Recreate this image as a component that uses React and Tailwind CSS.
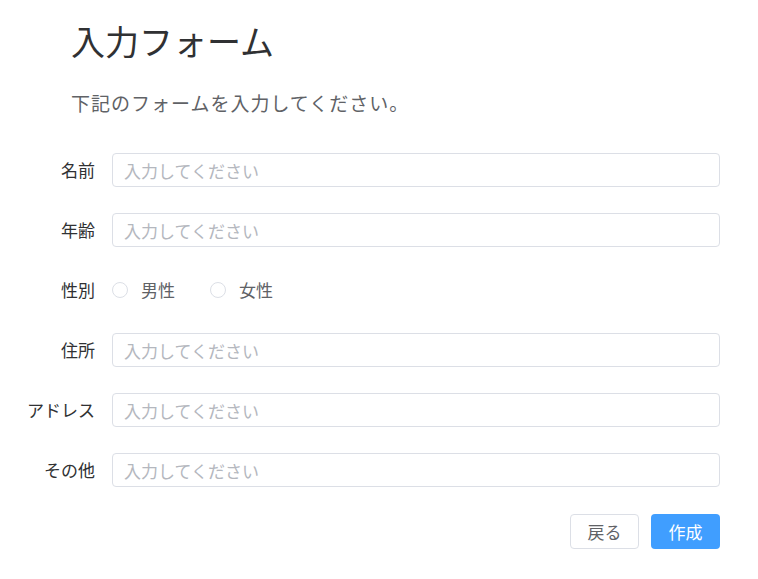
import React from 'react'

const fields = [
  { label: '名前', type: 'text' },
  { label: '年齢', type: 'text' },
  { label: '性別', type: 'radio' },
  { label: '住所', type: 'text' },
  { label: 'アドレス', type: 'text' },
  { label: 'その他', type: 'text' },
]

function Radio({ label }) {
  return (
    <label className="flex items-center gap-[13px] cursor-pointer">
      <span className="w-4 h-4 rounded-full border border-[#dcdfe6] bg-white" />
      <span className="text-[17px] text-[#606266]">{label}</span>
    </label>
  )
}

export default function App() {
  return (
    <div
      className="w-[758px] h-[579px] bg-white"
      style={{ fontFamily: '"Noto Sans CJK JP", "Noto Sans", sans-serif' }}
    >
      <h1 className="ml-[71px] pt-[14px] text-[34px] leading-[54px] font-normal text-[#303133]">入力フォーム</h1>
      <p className="ml-[71px] mt-[21px] text-[19px] leading-[28px] tracking-[1px] text-[#606266]">下記のフォームを入力してください。</p>

      <form className="mt-[36px] w-[720px] flex flex-col gap-[26px]">
        {fields.map((f) => (
          <div key={f.label} className="flex items-center h-[34px]">
            <div className="w-[112px] pr-[17px] text-right text-[17px] text-[#303133] shrink-0">{f.label}</div>
            {f.type === 'radio' ? (
              <div className="flex items-center gap-[35px]">
                <Radio label="男性" />
                <Radio label="女性" />
              </div>
            ) : (
              <input
                type="text"
                placeholder="入力してください"
                className="flex-1 h-[34px] px-[11px] rounded-[4px] border border-[#dcdfe6] text-[17px] text-[#606266] placeholder:text-[#b4b7be] outline-none"
              />
            )}
          </div>
        ))}
        <div className="flex justify-end gap-3 mt-px">
          <button type="button" className="w-[69px] h-[35px] rounded-[4px] border border-[#dcdfe6] bg-white text-[17px] text-[#606266]">戻る</button>
          <button type="button" className="w-[69px] h-[35px] rounded-[4px] bg-[#409eff] text-[17px] text-white">作成</button>
        </div>
      </form>
    </div>
  )
}
